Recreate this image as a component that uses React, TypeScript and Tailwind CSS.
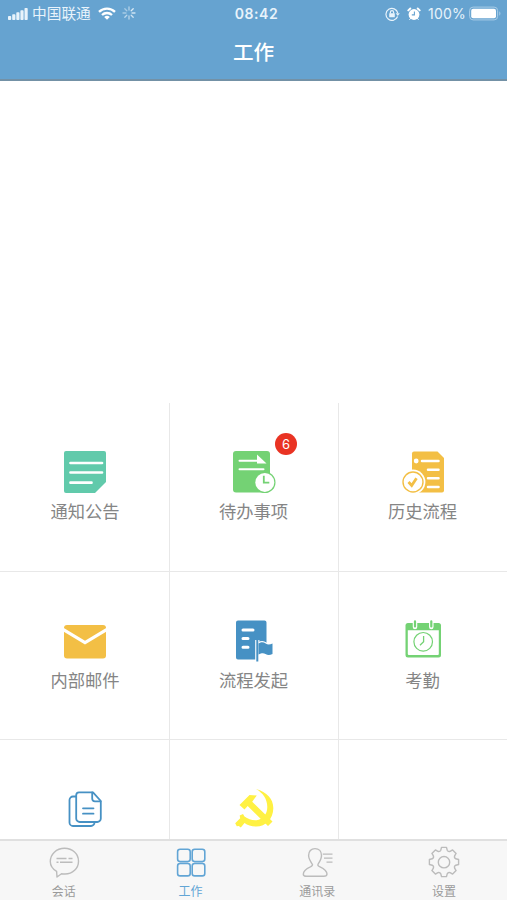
import type { ReactNode } from "react";

function NoticeIcon() {
  return (
    <svg viewBox="0 0 48 48" className="w-12 h-12">
      <path d="M5 3h38a2 2 0 0 1 2 2v29L34 45H5a2 2 0 0 1-2-2V5a2 2 0 0 1 2-2Z" fill="#61caab" />
      <path d="M9.5 15h31.5M9.5 24.5h31.5M9.5 34.7h21" stroke="#fff" strokeWidth="2.7" strokeLinecap="round" />
    </svg>
  );
}

function TodoIcon() {
  return (
    <svg viewBox="0 0 48 48" className="w-12 h-12">
      <rect x="3" y="3" width="37" height="41.5" rx="3" fill="#74d274" />
      <path d="M9.5 12.8h18M9.5 21.2h24" stroke="#fff" strokeWidth="2" strokeLinecap="round" />
      <path d="M27 6.5 36.5 15.5H27Z" fill="#fff" />
      <circle cx="34.8" cy="34.4" r="10.7" fill="#74d274" />
      <circle cx="34.8" cy="34.4" r="9.5" fill="#fff" />
      <path d="M33.8 27.8v6.9h5.5" fill="none" stroke="#74d274" strokeWidth="1.8" />
    </svg>
  );
}

function HistoryIcon() {
  return (
    <svg viewBox="0 0 48 48" className="w-12 h-12">
      <path d="M15 3.5h23.5L45 10v32.5a2 2 0 0 1-2 2H15a2 2 0 0 1-2-2v-37a2 2 0 0 1 2-2Z" fill="#f3bf45" />
      <path d="M23 13h16.5M29 21.7h10.5M29 30.3h10.5M29 39h10.5" stroke="#fff" strokeWidth="2.5" strokeLinecap="round" />
      <circle cx="17.2" cy="13" r="2.4" fill="#fff" />
      <circle cx="14" cy="34" r="12.4" fill="#fff" />
      <circle cx="14" cy="34" r="10" fill="#fff" stroke="#f3bf45" strokeWidth="1.4" />
      <path d="m9.5 34 3.2 3.5 4.8-7.3" fill="none" stroke="#f3bf45" strokeWidth="2.8" />
    </svg>
  );
}

function MailIcon() {
  return (
    <svg viewBox="0 0 48 48" className="w-12 h-12">
      <rect x="3" y="8" width="42" height="33.5" rx="3" fill="#f3bf45" />
      <path d="m2 12.3 22 13.4 22-13.4" fill="none" stroke="#fff" strokeWidth="3.2" />
    </svg>
  );
}

function StartIcon() {
  return (
    <svg viewBox="0 0 48 48" className="w-12 h-12">
      <path d="M8 3.500h26.500a2 2 0 0 1 2 2V32H28v10.500H8a2 2 0 0 1-2-2v-35a2 2 0 0 1 2-2Z" fill="#4691c4" />
      <path d="M13 13h10M13 21.500h5M13 30.200h5" stroke="#fff" strokeWidth="3" strokeLinecap="round" />
      <path d="M27.300 23v22" stroke="#fff" strokeWidth="4.200" />
      <path
        d="M28.500 26.500c3-2 5.200-1.500 7.200 0s4.300 1.200 6.800 0v10.500c-3 1.500-5 1.200-7 0s-4-1-7 .5Z"
        fill="#4691c4"
        stroke="#fff"
        strokeWidth="2.200"
        paintOrder="stroke"
      />
      <path d="M27.300 23V44.500" stroke="#4691c4" strokeWidth="2" />
    </svg>
  );
}

function AttendanceIcon() {
  return (
    <svg viewBox="0 0 48 48" className="w-12 h-12">
      <rect x="6.5" y="6" width="35.5" height="34.5" rx="2.5" fill="#74d274" />
      <path d="M8.8 13.3h31v23.6a1 1 0 0 1-1 1h-29a1 1 0 0 1-1-1Z" fill="#fff" />
      <path d="M16 4v6M32.300 4v6" stroke="#fff" strokeWidth="4.5" strokeLinecap="round" />
      <path d="M16 4.300v5.200M32.300 4.300v5.200" stroke="#74d274" strokeWidth="2.200" strokeLinecap="round" />
      <circle cx="24.2" cy="24.8" r="9.3" fill="none" stroke="#74d274" strokeWidth="1.2" />
      <path d="M24.6 19v5.800l-3.600 3.500" fill="none" stroke="#74d274" strokeWidth="1.3" />
    </svg>
  );
}

function DocumentsIcon() {
  return (
    <svg viewBox="0 0 48 48" className="w-12 h-12" fill="none" stroke="#4691c4" strokeWidth="1.8" strokeLinejoin="round">
      <path d="M15.500 11.500H12a3.500 3.500 0 0 0-3.500 3.500v22.500A3.500 3.500 0 0 0 12 41h18a3.500 3.500 0 0 0 3.500-3.500v-.5" />
      <path d="M18 7.300h14l7.800 8.700v17.500a3.500 3.500 0 0 1-3.500 3.500H18.700a3.500 3.500 0 0 1-3.500-3.500V10.300a3 3 0 0 1 2.800-3Z" />
      <path d="M31.200 7.500v6a2.800 2.800 0 0 0 2.800 2.800h5.600M22 23.300h10.500M22 28.700h10.500" strokeLinecap="round" />
    </svg>
  );
}

function PartyIcon() {
  return (
    <svg viewBox="0 0 48 48" className="w-12 h-12" fill="#fff143">
      <path d="M26 4C37 7 43.500 14 43.300 23.500 43 34 36 41.500 26 41.500c-5 0-8.500-1.300-11.500-3.500L10.800 42.500l-2-1.600-2 .3-1.600-2.900 5-5-.5-2.700 3.300-1.600 1.500 2.500C18 34 22 35.500 26.500 35.200 33 34.500 37.300 29 37.300 22 37.300 14 33 8 26 4Z" />
      <path d="m9.500 20 10-10 7.300.5-4.600 6.300 20.300 19.700-4.500 4.500L17.700 21l-3.200 3.500Z" />
    </svg>
  );
}

function ChatIcon() {
  return (
    <svg viewBox="0 0 32 32" className="w-8 h-8" fill="none" stroke="currentColor" strokeWidth="1.4" strokeLinejoin="round">
      <path d="M8.600 25.300C4.600 23 2.300 19.500 2.300 15.500 2.300 8.300 8.400 2.300 16.500 2.300S30.500 8 30.500 15.200 24.600 28 17 28c-1.300 0-2.400 0-3.500-.3L9 31Z" />
      <path d="M8.500 12.500h10M20.500 12.500h4M8.500 16.300h2M12 16.300h12.500" />
    </svg>
  );
}

function WorkIcon() {
  return (
    <svg viewBox="0 0 32 32" className="w-8 h-8" fill="none" stroke="currentColor" strokeWidth="1.6">
      <rect x="2.6" y="3.2" width="12.6" height="12.4" rx="2.5" />
      <rect x="17.2" y="3.2" width="12.6" height="12.4" rx="2.5" />
      <rect x="2.6" y="17.5" width="12.6" height="12.4" rx="2.5" />
      <rect x="17.2" y="17.5" width="12.6" height="12.4" rx="2.5" />
    </svg>
  );
}

function ContactsIcon() {
  return (
    <svg viewBox="0 0 32 32" className="w-8 h-8" fill="none" stroke="currentColor" strokeWidth="1.4" strokeLinejoin="round">
      <path d="M14 2.600c-4 0-6.400 2.800-6.400 7 0 3.500 1.700 5.700 3.800 8.700.5 1.200-.7 1.900-2 2.500C5 22.700 2.300 25 2.300 28.200c0 1.500 1.500 2.100 3.200 2.100h17.200c2 0 3.300-.6 3.300-2.200 0-3.200-2.700-5.300-7-7.300-1.500-.7-2.600-1.300-2-2.500 2-3 3.500-5.200 3.500-8.700 0-4.200-2.500-7-6.500-7Z" />
      <path d="M21.700 8.200h9.800M23 12.200h8.500M25.500 16.200h6" strokeWidth="1.3" />
    </svg>
  );
}

function SettingsIcon() {
  return (
    <svg viewBox="0 0 32 32" className="w-8 h-8" fill="none" stroke="currentColor" strokeWidth="1.4" strokeLinejoin="round">
      <path d="M12.800 4.200 13.500 1.400h5L19.200 4.200Q20.100 6 22.100 5.400L24.600 3.900 28.100 7.400 26.600 9.900Q26 11.900 27.800 12.800L30.600 13.500v5L27.800 19.200Q26 20.100 26.600 22.100L28.100 24.600 24.600 28.100 22.100 26.600Q20.100 26 19.200 27.800L18.500 30.600h-5L12.800 27.800Q11.900 26 9.900 26.600L7.400 28.100 3.900 24.600 5.400 22.100Q6 20.100 4.200 19.200L1.400 18.500v-5L4.200 12.800Q6 11.900 5.400 9.900L3.900 7.400 7.400 3.900 9.900 5.400Q11.900 6 12.800 4.200Z" />
      <circle cx="16" cy="16.2" r="5.7" />
    </svg>
  );
}

function StatusBar() {
  return (
    <div className="h-7 flex items-center justify-between pl-2 pr-[5px] text-[#e8f3fb]">
      <div className="w-[180px] flex items-center">
        <svg viewBox="0 0 20 12" className="w-5 h-3 mr-1" fill="currentColor">
          <rect x="0" y="8" width="3.2" height="4" rx=".8" />
          <rect x="4.2" y="6.3" width="3.2" height="5.7" rx=".8" />
          <rect x="8.3" y="4.2" width="3.2" height="7.8" rx=".8" />
          <rect x="12.4" y="2.2" width="3.2" height="9.8" rx=".8" />
          <rect x="16.5" y="0" width="3.2" height="12" rx=".8" />
        </svg>
        <span className="text-[14.7px] leading-5">中国联通</span>
        <svg viewBox="0 0 18 13" className="w-[18px] h-[13px] ml-[7px] -mt-0.5" fill="none" stroke="#fff" strokeWidth="2.3">
          <path d="M1 4.900a11.500 11.500 0 0 1 16 0M4 8a7.300 7.300 0 0 1 10 0" />
          <path d="M9 12.800 6.200 10a4 4 0 0 1 5.600 0Z" fill="#fff" stroke="none" />
        </svg>
        <svg viewBox="0 0 14 14" className="w-3.5 h-3.5 ml-[6px] -mt-0.5" stroke="currentColor" strokeWidth="1.3" strokeLinecap="round">
          <path d="M7 1v3" opacity=".6" />
          <path d="m11.200 2.800-2 2" opacity=".9" />
          <path d="M13 7h-3M11.200 11.200l-2-2" opacity=".8" />
          <path d="M7 13v-3M2.800 11.200l2-2" opacity=".65" />
          <path d="M1 7h3M2.800 2.800l2 2" opacity=".5" />
        </svg>
      </div>
      <span className="pl-[3px] text-[14px] leading-5 -mt-px font-semibold tracking-[0.6px]">08:42</span>
      <div className="w-[180px] flex items-center justify-end -mt-px">
        <svg viewBox="0 0 15 14" className="w-[15px] h-3.5 mr-[7px]" fill="none" stroke="currentColor" strokeWidth="1.2">
          <path d="M12.600 9.500A6 6 0 1 1 12.800 6" />
          <path d="m10.700 6.200 4.100 0-2 2.800Z" fill="currentColor" stroke="none" />
          <rect x="4.2" y="6.3" width="5.6" height="4" rx=".5" fill="currentColor" stroke="none" />
          <path d="M5.400 6.500V5.300a1.600 1.600 0 0 1 3.200 0v1.200" />
        </svg>
        <svg viewBox="0 0 14 14" className="w-3.5 h-3.5 mr-[7px]" fill="#fff">
          <circle cx="7" cy="7.5" r="5.4" />
          <path d="M1.300 3.400 3.300 1.500M12.700 3.400l-2-1.900" stroke="#fff" strokeWidth="1.9" strokeLinecap="round" />
          <path d="m3.500 11.500-.8 1M10.500 11.500l.8 1" stroke="#fff" strokeLinecap="round" />
          <path d="M7.400 4.500v3.400H4.800" fill="none" stroke="#66a3d0" strokeWidth="1.1" />
        </svg>
        <span className="text-[14px] leading-5 tracking-[0.2px]">100%</span>
        <svg viewBox="0 0 33 15" className="w-[33px] h-[15px] ml-[3px]">
          <rect x=".6" y="1.1" width="28" height="12.8" rx="3.5" fill="none" stroke="#a9cde7" />
          <rect x="2.2" y="2.7" width="24.8" height="9.6" rx="2" fill="#fff" />
          <path d="M30.300 5.300v4.400c1.500-.7 1.500-3.700 0-4.400Z" fill="#a9cde7" />
        </svg>
      </div>
    </div>
  );
}

type Tile = { label: string; icon: ReactNode; badge?: number };

const tiles: Tile[] = [
  { label: "通知公告", icon: <NoticeIcon /> },
  { label: "待办事项", icon: <TodoIcon />, badge: 6 },
  { label: "历史流程", icon: <HistoryIcon /> },
  { label: "内部邮件", icon: <MailIcon /> },
  { label: "流程发起", icon: <StartIcon /> },
  { label: "考勤", icon: <AttendanceIcon /> },
  { label: "", icon: <DocumentsIcon /> },
  { label: "", icon: <PartyIcon /> },
  { label: "", icon: null },
];

const tabs = [
  { label: "会话", icon: <ChatIcon /> },
  { label: "工作", icon: <WorkIcon />, active: true },
  { label: "通讯录", icon: <ContactsIcon /> },
  { label: "设置", icon: <SettingsIcon /> },
];

export default function App() {
  return (
    <div className="h-[900px] w-full flex flex-col overflow-hidden bg-white font-[Inter,'Noto_Sans_CJK_SC',sans-serif]">
      <header className="h-[81px] shrink-0 bg-[#66a3d0] border-b-2 border-[#7391a6]">
        <StatusBar />
        <h1 className="pt-px text-center text-[20.6px] leading-[48px] font-medium text-white">工作</h1>
      </header>

      <main className="flex-1 min-h-0 overflow-hidden pt-[322px]">
        <div className="grid grid-cols-3">
          {tiles.map((tile, i) => (
            <div
              key={i}
              className="relative h-[168.5px] flex flex-col items-center pt-[45px] pr-px border-b border-l border-[#e8e8e8] nth-[3n+1]:border-l-0 nth-[3n+1]:pr-0 nth-[3n+1]:pl-px"
            >
              {tile.icon}
              <span className="mt-[4px] text-[17.3px] leading-6 text-[#858585]">{tile.label}</span>
              {tile.badge && (
                <span className="absolute top-[30px] left-[105px] w-[22px] h-[22px] rounded-full bg-[#e93323] text-white text-[13px] leading-[22px] text-center">
                  {tile.badge}
                </span>
              )}
            </div>
          ))}
        </div>
      </main>

      <nav className="h-[61px] shrink-0 grid grid-cols-4 bg-[#f7f7f7] border-t-2 border-[#e0e0e0]">
        {tabs.map((tab) => (
          <div
            key={tab.label}
            className={`flex flex-col items-center pt-[5px] pl-px ${tab.active ? "text-[#62a5d5]" : "text-[#bcbcbc]"}`}
          >
            {tab.icon}
            <span className={`mt-1.5 text-[12px] leading-4 ${tab.active ? "" : "text-[#9b9b9b]"}`}>{tab.label}</span>
          </div>
        ))}
      </nav>
    </div>
  );
}
